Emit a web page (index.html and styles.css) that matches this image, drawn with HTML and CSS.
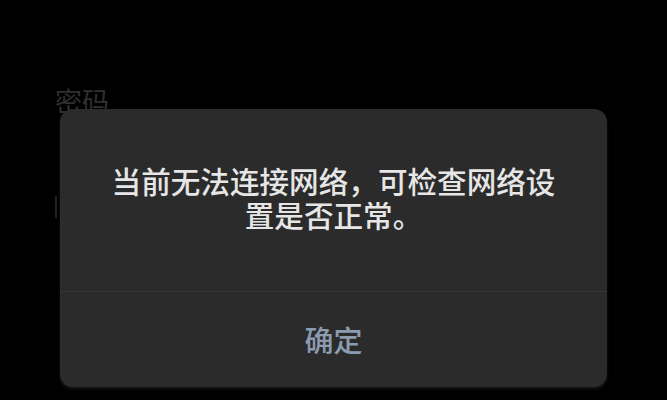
FILE: index.html
```html
<!DOCTYPE html>
<html lang="zh-CN">
<head>
<meta charset="utf-8">
<link rel="stylesheet" href="styles.css">
</head>
<body>
<div class="page">
  <div class="form">
    <div class="label">密码</div>
    <div class="field"></div>
  </div>
  <div class="dialog">
    <div class="message">当前无法连接网络，可检查网络设置是否正常。</div>
    <div class="actions">
      <div class="btn">确定</div>
    </div>
  </div>
</div>
</body>
</html>
```
FILE: styles.css
```css
html, body {
  margin: 0;
  padding: 0;
  background: #000;
}
.page {
  position: relative;
  width: 667px;
  height: 400px;
  overflow: hidden;
  background: #000;
  font-family: "Noto Sans CJK SC", "Noto Sans", sans-serif;
}
.form {
  padding: 84px 0 0 55px;
}
.label {
  font-size: 27px;
  line-height: 34px;
  color: #303030;
}
.field {
  margin-top: 78px;
  width: 2px;
  height: 22px;
  background: #222222;
}
.dialog {
  position: absolute;
  left: 60px;
  top: 109px;
  width: 547px;
  height: 278px;
  background: #2b2b2b;
  border-radius: 13px;
  display: flex;
  flex-direction: column;
  box-shadow: 0 2px 3px rgba(40,40,40,0.6);
}
.message {
  height: 183px;
  box-sizing: border-box;
  padding: 55px 40px 0 40px;
  font-size: 29.6px;
  font-weight: 500;
  line-height: 34px;
  color: #e6e6e6;
  text-align: center;
  border-bottom: 1px solid #363636;
}
.actions {
  flex: 1;
  display: flex;
  align-items: center;
  justify-content: center;
}
.btn {
  font-size: 29px;
  font-weight: 500;
  color: #8b9bb0;
  margin-top: -2px;
}
```
